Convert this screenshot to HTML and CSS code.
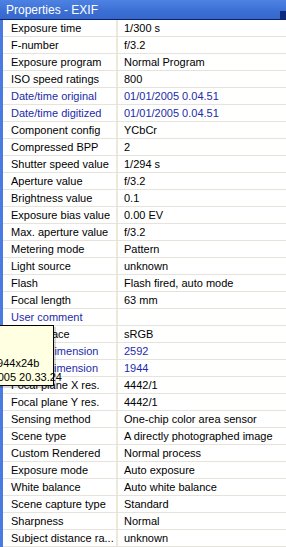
FILE: index.html
```html
<!DOCTYPE html>
<html>
<head>
<meta charset="utf-8">
<link rel="stylesheet" href="styles.css">
</head>
<body>
<div class="panel">
  <div class="titlebar"><span class="title">Properties - EXIF</span><span class="pin"></span></div>
  <div class="list">
    <div class="row"><div class="k">Exposure time</div><div class="v">1/300 s</div></div>
    <div class="row"><div class="k">F-number</div><div class="v">f/3.2</div></div>
    <div class="row"><div class="k">Exposure program</div><div class="v">Normal Program</div></div>
    <div class="row"><div class="k">ISO speed ratings</div><div class="v">800</div></div>
    <div class="row blue"><div class="k">Date/time original</div><div class="v">01/01/2005 0.04.51</div></div>
    <div class="row blue"><div class="k">Date/time digitized</div><div class="v">01/01/2005 0.04.51</div></div>
    <div class="row"><div class="k">Component config</div><div class="v">YCbCr</div></div>
    <div class="row"><div class="k">Compressed BPP</div><div class="v">2</div></div>
    <div class="row"><div class="k">Shutter speed value</div><div class="v">1/294 s</div></div>
    <div class="row"><div class="k">Aperture value</div><div class="v">f/3.2</div></div>
    <div class="row"><div class="k">Brightness value</div><div class="v">0.1</div></div>
    <div class="row"><div class="k">Exposure bias value</div><div class="v">0.00 EV</div></div>
    <div class="row"><div class="k">Max. aperture value</div><div class="v">f/3.2</div></div>
    <div class="row"><div class="k">Metering mode</div><div class="v">Pattern</div></div>
    <div class="row"><div class="k">Light source</div><div class="v">unknown</div></div>
    <div class="row"><div class="k">Flash</div><div class="v">Flash fired, auto mode</div></div>
    <div class="row"><div class="k">Focal length</div><div class="v">63 mm</div></div>
    <div class="row blue"><div class="k">User comment</div><div class="v"></div></div>
    <div class="row"><div class="k">Color space</div><div class="v">sRGB</div></div>
    <div class="row blue"><div class="k">Pixel X dimension</div><div class="v">2592</div></div>
    <div class="row blue"><div class="k">Pixel Y dimension</div><div class="v">1944</div></div>
    <div class="row"><div class="k">Focal plane X res.</div><div class="v">4442/1</div></div>
    <div class="row"><div class="k">Focal plane Y res.</div><div class="v">4442/1</div></div>
    <div class="row"><div class="k">Sensing method</div><div class="v">One-chip color area sensor</div></div>
    <div class="row"><div class="k">Scene type</div><div class="v">A directly photographed image</div></div>
    <div class="row"><div class="k">Custom Rendered</div><div class="v">Normal process</div></div>
    <div class="row"><div class="k">Exposure mode</div><div class="v">Auto exposure</div></div>
    <div class="row"><div class="k">White balance</div><div class="v">Auto white balance</div></div>
    <div class="row"><div class="k">Scene capture type</div><div class="v">Standard</div></div>
    <div class="row"><div class="k">Sharpness</div><div class="v">Normal</div></div>
    <div class="row"><div class="k">Subject distance ra...</div><div class="v">unknown</div></div>
  </div>
  <div class="tooltip">
    <div class="tl">&nbsp;</div>
    <div class="tl">&nbsp;</div>
    <div class="tl">2592x1944x24b</div>
    <div class="tl">01/01/2005 20.33.24</div>
  </div>
</div>
</body>
</html>
```
FILE: styles.css
```css
html, body {
  margin: 0;
  padding: 0;
  background: #ffffff;
}
body {
  width: 286px;
  height: 547px;
  overflow: hidden;
  font-family: "Liberation Sans", Arial, sans-serif;
  font-size: 11px;
  color: #000;
}
.panel {
  position: relative;
  width: 286px;
  height: 547px;
  overflow: hidden;
}
.titlebar {
  height: 20px;
  box-sizing: border-box;
  border-bottom: 1px solid #0a2468;
  background: linear-gradient(#4d82e2, #3c6fd4 60%, #3566cc);
  display: flex;
  align-items: center;
  justify-content: space-between;
}
.title {
  color: #ffffff;
  font-size: 12px;
  padding-left: 6px;
}
.pin {
  width: 6px;
  height: 8px;
  background: #0c2a78;
  margin-top: 10px;
}
.list {
  border-left: 3px solid #4a7be0;
  background: #fff;
  background-image: linear-gradient(#ece9d8, #ece9d8);
  background-repeat: no-repeat;
  background-size: 2px 100%;
  background-position: 113px 0;
}
.row {
  display: grid;
  grid-template-columns: 113px 2px 1fr;
  height: 17px;
  box-sizing: border-box;
  border-bottom: 1px solid #e6e4da;
  align-items: center;
  white-space: nowrap;
}
.k {
  padding-left: 8px;
  grid-column: 1;
  overflow: hidden;
}
.v {
  grid-column: 3;
  padding-left: 6px;
  overflow: hidden;
}
.blue .k, .blue .v {
  color: #1c2ba8;
}
.tooltip {
  position: absolute;
  left: -110px;
  top: 325px;
  width: 164px;
  height: 61px;
  box-sizing: border-box;
  border: 1px solid #000;
  background: #ffffe1;
  box-shadow: 2px 2px 0 rgba(0, 0, 0, 0.15);
  padding: 2px 0 0 70px;
  white-space: nowrap;
}
.tl {
  height: 14px;
  line-height: 14px;
}
```
